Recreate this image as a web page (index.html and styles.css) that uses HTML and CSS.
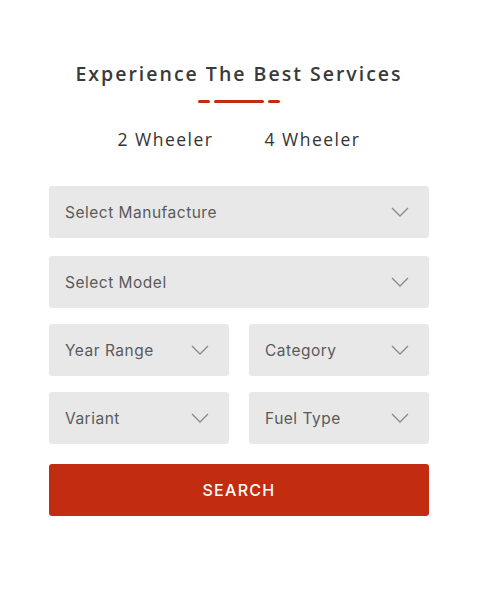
FILE: index.html
```html
<!DOCTYPE html>
<html>
<head>
<meta charset="utf-8">
<link rel="stylesheet" href="styles.css">
</head>
<body>
<div class="panel">
  <h2 class="title">Experience The Best Services</h2>
  <div class="dashes"><span class="d-short"></span><span class="d-long"></span><span class="d-short"></span></div>
  <div class="tabs"><span class="tab">2 Wheeler</span><span class="tab">4 Wheeler</span></div>
  <form class="form">
    <div class="field first"><span>Select Manufacture</span><svg class="chev" viewBox="0 0 18 10"><path d="M1 1l8 8 8-8" fill="none" stroke="#8a8a8a" stroke-width="1.3"/></svg></div>
    <div class="field"><span>Select Model</span><svg class="chev" viewBox="0 0 18 10"><path d="M1 1l8 8 8-8" fill="none" stroke="#8a8a8a" stroke-width="1.3"/></svg></div>
    <div class="pair">
      <div class="field"><span>Year Range</span><svg class="chev" viewBox="0 0 18 10"><path d="M1 1l8 8 8-8" fill="none" stroke="#8a8a8a" stroke-width="1.3"/></svg></div>
      <div class="field"><span>Category</span><svg class="chev" viewBox="0 0 18 10"><path d="M1 1l8 8 8-8" fill="none" stroke="#8a8a8a" stroke-width="1.3"/></svg></div>
    </div>
    <div class="pair">
      <div class="field"><span>Variant</span><svg class="chev" viewBox="0 0 18 10"><path d="M1 1l8 8 8-8" fill="none" stroke="#8a8a8a" stroke-width="1.3"/></svg></div>
      <div class="field"><span>Fuel Type</span><svg class="chev" viewBox="0 0 18 10"><path d="M1 1l8 8 8-8" fill="none" stroke="#8a8a8a" stroke-width="1.3"/></svg></div>
    </div>
    <div class="btn">SEARCH</div>
  </form>
</div>
</body>
</html>
```
FILE: styles.css
```css
* { box-sizing: border-box; }
body { margin: 0; background: #fff; font-family: "Inter", "Open Sans", sans-serif; }
.panel { width: 380px; margin-left: 49px; padding-top: 61px; display: flex; flex-direction: column; align-items: center; }
.title { margin: 0; font-family: "Open Sans", sans-serif; font-weight: 600; font-size: 19.5px; letter-spacing: 2px; color: #3a3a3a; line-height: 26px; white-space: nowrap; }
.dashes { display: flex; gap: 4px; margin-top: 13px; }
.dashes span { height: 3px; background: #c22c10; border-radius: 2px; }
.d-short { width: 12px; }
.d-long { width: 50px; }
.tabs { display: flex; gap: 51px; margin-top: 24px; }
.tab { font-family: "Open Sans", sans-serif; font-size: 17.5px; font-weight: 500; letter-spacing: 1.5px; color: #333; line-height: 24px; }
.form { width: 380px; margin-top: 35px; display: flex; flex-direction: column; gap: 16px; }
.first { margin-bottom: 2px; }
.pair { display: grid; grid-template-columns: 1fr 1fr; gap: 20px; }
.field { height: 52px; background: #e8e8e8; border-radius: 3px; display: flex; align-items: center; justify-content: space-between; padding: 0 20px 0 16px; font-size: 15.5px; letter-spacing: 0.5px; color: #5a5a5a; }
.chev { width: 18px; height: 10px; }
.btn { margin-top: 4px; height: 52px; background: #c22c10; border-radius: 3px; color: #fff; display: flex; align-items: center; justify-content: center; font-size: 16px; font-weight: 500; letter-spacing: 1.3px; }
```
